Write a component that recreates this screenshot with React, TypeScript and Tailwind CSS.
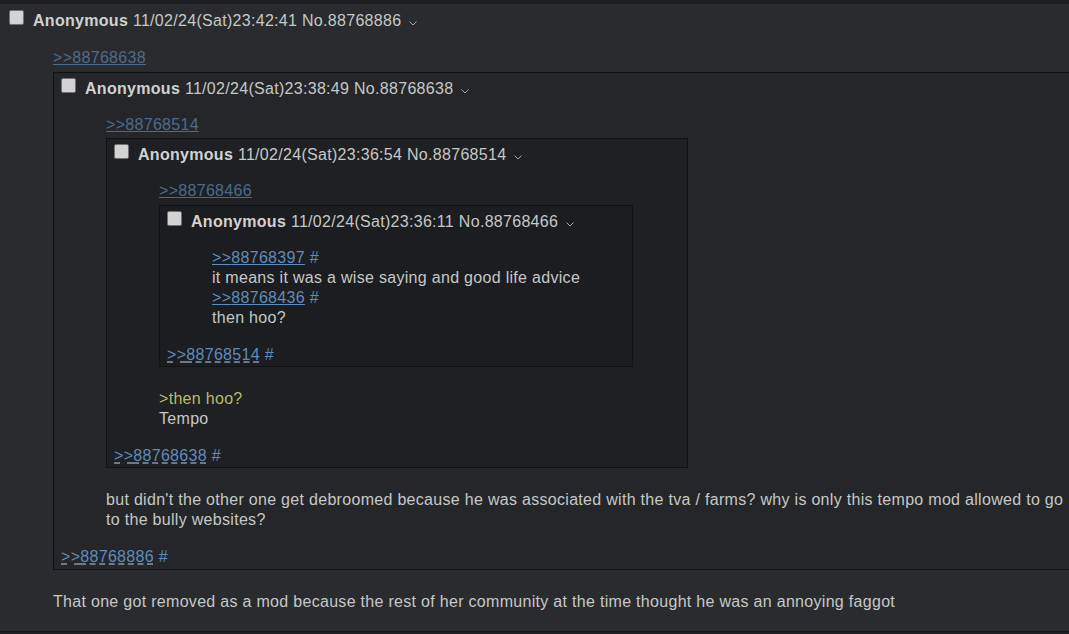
import React from "react";

const FONT = { fontFamily: '"Liberation Sans", Arial, sans-serif' };

const Checkbox = () => (
  <span className="mt-[-1px] block h-[15px] w-[15px] shrink-0 rounded-[2px] border border-[#727272] bg-[#d3d3d3]" />
);

const Chevron = () => (
  <svg width="8" height="5" viewBox="0 0 8 5" className="ml-[8px] mt-[10px] shrink-0">
    <path d="M0.5 0.5 L4 4 L7.5 0.5" stroke="#a3a5a7" strokeWidth="1" fill="none" />
  </svg>
);

interface HeaderProps {
  date: string;
  no: string;
}

const PostHeader = ({ date, no }: HeaderProps) => (
  <div className="flex h-5 items-start">
    <Checkbox />
    <div className="ml-[9px] flex items-start whitespace-nowrap">
      <span>
        <span className="font-bold text-[#d0d2d1]">Anonymous</span> {date} No.{no}
      </span>
      <Chevron />
    </div>
  </div>
);

const QuoteLink = ({ no }: { no: string }) => (
  <span>
    <a className="cursor-pointer text-[#5e8cbd] underline">&gt;&gt;{no}</a>{" "}
    <span className="text-[#5e8cbd]">#</span>
  </span>
);

const BackLink = ({ no, pad }: { no: string; pad: string }) => (
  <div className={`mt-[17px] ${pad}`}>
    <a className="cursor-pointer text-[#5e8cbd] underline decoration-[#8796a6] decoration-dashed underline-offset-[2px]">
      &gt;&gt;{no}
    </a>{" "}
    <span className="text-[#5e8cbd]">#</span>
  </div>
);

interface PostProps {
  date: string;
  no: string;
  box: string;
  quote?: string;
  children?: React.ReactNode;
  body: React.ReactNode;
  backlink?: string;
  quoteClass?: string;
  childGap?: string;
  backPad?: string;
}

const InlinePost = ({
  date,
  no,
  box,
  quote,
  children,
  body,
  backlink,
  quoteClass = "",
  childGap = "mt-[4px]",
  backPad = "pb-[1px]",
}: PostProps) => (
  <div className={`border border-[#111214] pl-[7px] pt-[6px] ${box}`}>
    <PostHeader date={date} no={no} />
    <div className={`ml-[45px] mt-4 ${quoteClass}`}>
      {quote && (
        <>
          <a className="block w-fit cursor-pointer text-[#4d6b89] underline">&gt;&gt;{quote}</a>
          <div className={childGap}>{children}</div>
        </>
      )}
      <div className={quote ? "mt-[22px]" : ""}>{body}</div>
    </div>
    {backlink && <BackLink no={backlink} pad={backPad} />}
  </div>
);

export default function App() {
  return (
    <div
      className="h-[634px] w-full overflow-hidden bg-[#1d1e21] pt-[4px] text-[16px] leading-5 tracking-[0.3px] text-[#c5c8c6]"
      style={FONT}
    >
      <div className="w-[1100px] border-b border-[#141517] bg-[#2a2b2f] pb-[19px] pl-[9px] pt-[7px]">
        <PostHeader date="11/02/24(Sat)23:42:41" no="88768886" />
        <div className="ml-[44px] mt-[17px]">
          <a className="block w-fit cursor-pointer text-[#4d6b89] underline">&gt;&gt;88768638</a>
          <div className="mt-[4px]">
            <InlinePost
              date="11/02/24(Sat)23:38:49"
              no="88768638"
              box="w-[1040px] bg-[#25262a]"
              quote="88768514"
              quoteClass="mr-[21px]"
              childGap="mt-[3px]"
              backPad="pb-[2px]"
              backlink="88768886"
              body={
                <p>
                  but didn't the other one get debroomed because he was associated with the tva / farms? why is
                  only this tempo mod allowed to go to the bully websites?
                </p>
              }
            >
              <InlinePost
                date="11/02/24(Sat)23:36:54"
                no="88768514"
                box="w-[582px] bg-[#1f2023]"
                quote="88768466"
                backlink="88768638"
                body={
                  <>
                    <p className="text-[#b5bd68]">&gt;then hoo?</p>
                    <p>Tempo</p>
                  </>
                }
              >
                <InlinePost
                  date="11/02/24(Sat)23:36:11"
                  no="88768466"
                  box="w-[474px] bg-[#1c1d20]"
                  backlink="88768514"
                  body={
                    <>
                      <p>
                        <QuoteLink no="88768397" />
                      </p>
                      <p>it means it was a wise saying and good life advice</p>
                      <p>
                        <QuoteLink no="88768436" />
                      </p>
                      <p>then hoo?</p>
                    </>
                  }
                />
              </InlinePost>
            </InlinePost>
          </div>
          <p className="mt-[22px]">
            That one got removed as a mod because the rest of her community at the time thought he was an annoying
            faggot
          </p>
        </div>
      </div>
    </div>
  );
}
